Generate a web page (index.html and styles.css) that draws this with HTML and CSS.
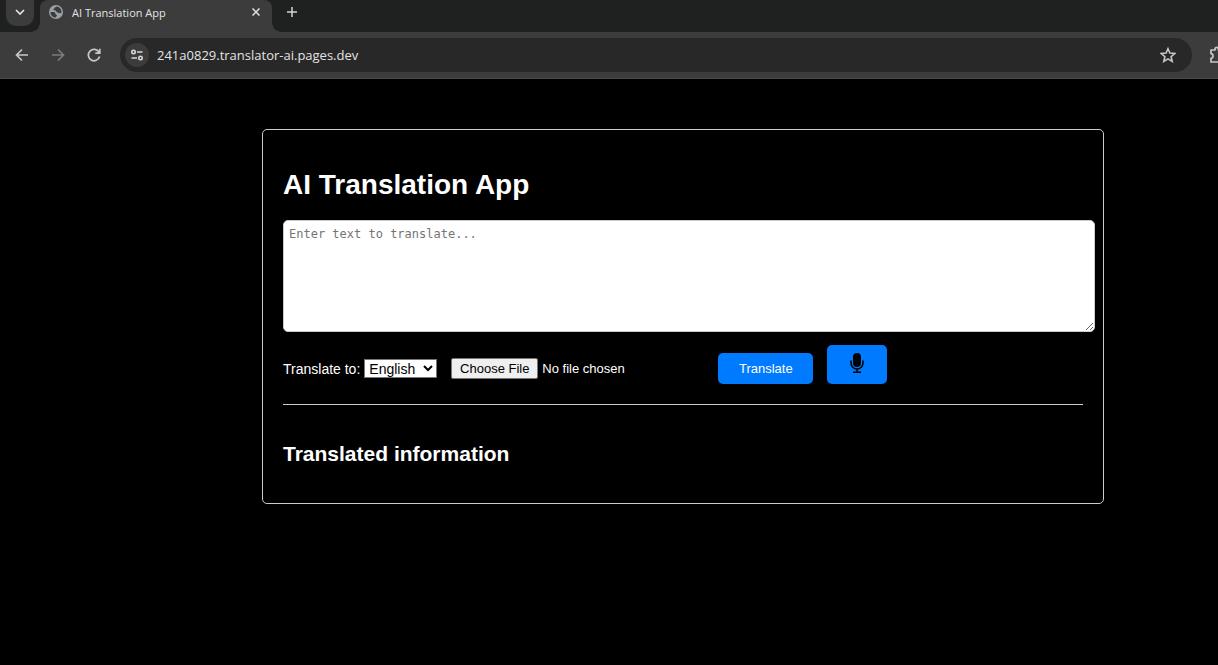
FILE: index.html
```html
<!DOCTYPE html>
<html lang="en">
<head>
<meta charset="utf-8">
<title>AI Translation App</title>
<link rel="stylesheet" href="styles.css">
</head>
<body>
<header class="browser">
  <div class="tab-strip">
    <button class="tab-search" aria-label="Search tabs">
      <svg width="10" height="6" viewBox="0 0 10 6"><path d="M1 1l4 4 4-4" fill="none" stroke="#e3e3e3" stroke-width="1.700"/></svg>
    </button>
    <div class="tab">
      <svg width="14" height="14" viewBox="0 0 14 14"><circle cx="7" cy="7" r="7" fill="#9aa0a6"/><path d="M7.500 1.500C5.500 2.200 6.300 3.300 5 3.500c-1 .2-.8 1.500.5 1.700 1.500.1 1.800.8 2 1.800.3 1 1.800.2 2.500 1 .7.500 2 .3 2.500-.5C12.700 4 10.500 1.800 7.500 1.500zM1.500 7c1.500.2 3.500-.3 4.500.7.8.8.2 1.800 1.500 2.100 1 .4-.1 1.700-.9 2.700C3.500 12.500 1.400 10 1.500 7z" fill="#3c3c3c"/></svg>
      <span class="tab-title">AI Translation App</span>
      <button class="plain" aria-label="Close tab">
        <svg width="8" height="8" viewBox="0 0 8 8"><path d="M.5.5l7 7M7.500.5l-7 7" stroke="#e3e3e3" stroke-width="1.500"/></svg>
      </button>
    </div>
    <button class="plain new-tab" aria-label="New tab">
      <svg width="12" height="12" viewBox="0 0 12 12"><path d="M6 1v10M1 6h10" stroke="#d4d4d4" stroke-width="1.500"/></svg>
    </button>
  </div>
  <div class="toolbar">
    <button class="plain nav" aria-label="Back">
      <svg width="14" height="14" viewBox="0 0 14 14"><path d="M13 7H2M7 1.500L1.500 7 7 12.500" fill="none" stroke="#c7c7c7" stroke-width="1.700"/></svg>
    </button>
    <button class="plain nav" aria-label="Forward">
      <svg width="14" height="14" viewBox="0 0 14 14"><path d="M1 7h11M7 1.500L12.500 7 7 12.500" fill="none" stroke="#7b7b7b" stroke-width="1.700"/></svg>
    </button>
    <button class="plain nav" aria-label="Reload">
      <svg width="14" height="14" viewBox="0 0 14 14"><path d="M12 4.200A5.700 5.700 0 1 0 12.600 8.500M12.800.8v4.400H8.300" fill="none" stroke="#c7c7c7" stroke-width="1.700"/></svg>
    </button>
    <div class="address">
      <button class="plain site-info" aria-label="Site information">
        <svg width="14" height="12" viewBox="0 0 14 12"><g fill="none" stroke="#d8d8d8" stroke-width="1.600"><circle cx="3.500" cy="3" r="1.700"/><path d="M7 3h5.500M1.500 9H7"/><circle cx="10.500" cy="9" r="1.700"/></g></svg>
      </button>
      <input class="url" type="text" aria-label="Address" value="241a0829.translator-ai.pages.dev">
      <button class="plain" aria-label="Bookmark">
        <svg width="16" height="16" viewBox="0 0 16 16"><path d="M8 1.700l1.900 4.400 4.800.4-3.600 3.200 1.100 4.700L8 11.900l-4.200 2.500 1.100-4.700L1.300 6.500l4.800-.4z" fill="none" stroke="#c7c7c7" stroke-width="1.600"/></svg>
      </button>
    </div>
    <button class="plain extensions" aria-label="Extensions">
      <svg width="18" height="18" viewBox="0 0 18 18"><path d="M3 4h4V3a1.700 1.700 0 0 1 3.400 0v1H14v4.500h1a1.700 1.700 0 0 1 0 3.400h-1V16H3v-3.700c2.700-.3 2.700-4.300 0-4.600z" fill="none" stroke="#c7c7c7" stroke-width="1.700" stroke-linejoin="round"/></svg>
    </button>
  </div>
</header>
<main class="page">
  <section class="card">
    <h1>AI Translation App</h1>
    <textarea class="source" aria-label="Text to translate" placeholder="Enter text to translate..."></textarea>
    <div class="controls">
      <div class="field">
        <label for="language">Translate to:</label>
        <select id="language"><option>English</option></select>
      </div>
      <input class="file" type="file" aria-label="File to translate">
      <button class="action">Translate</button>
      <button class="action mic" aria-label="Speak">
        <svg width="16" height="22" viewBox="0 0 16 22"><rect x="4" y="1" width="8" height="14" rx="4" fill="#000"/><path d="M2 8.500v2.500a6 6 0 0 0 12 0v-2.500M8 17v3M4 20.200h8" fill="none" stroke="#000" stroke-width="1.500"/></svg>
      </button>
    </div>
    <div class="result">
      <h2>Translated information</h2>
    </div>
  </section>
</main>
</body>
</html>
```
FILE: styles.css
```css
* { box-sizing: border-box; }
body {
  margin: 0;
  min-height: 100vh;
  background: #000;
  color: #fff;
  font-family: "Liberation Sans", Arial, sans-serif;
  overflow-x: hidden;
}
svg { display: block; flex: none; }
.plain {
  display: flex;
  align-items: center;
  justify-content: center;
  padding: 0;
  border: 0;
  background: none;
}
.browser {
  background: #3c3c3c;
  border-bottom: 1px solid #4b4b4b;
  font-family: "Open Sans", "Noto Sans", sans-serif;
}
.tab-strip {
  display: flex;
  height: 32px;
  padding-left: 6px;
  background: #1f2120;
}
.tab-search {
  display: flex;
  align-items: center;
  justify-content: center;
  width: 28px;
  height: 26px;
  margin-right: 6px;
  padding: 0 0 2px;
  border: 0;
  border-radius: 0 0 10px 10px;
  background: #3c3c3c;
}
.tab {
  position: relative;
  display: flex;
  align-items: center;
  gap: 9px;
  width: 232px;
  padding: 0 12px 8px 9px;
  border-radius: 8px 8px 0 0;
  background: #3c3c3c;
}
.tab::before,
.tab::after {
  content: "";
  position: absolute;
  bottom: 0;
  width: 10px;
  height: 10px;
}
.tab::before {
  right: 100%;
  background: radial-gradient(circle at 0 0, transparent 10px, #3c3c3c 10px);
}
.tab::after {
  left: 100%;
  background: radial-gradient(circle at 100% 0, transparent 10px, #3c3c3c 10px);
}
.tab-title {
  flex: 1;
  padding-top: 2px;
  color: #e3e3e3;
  font-size: 11px;
  line-height: 16px;
}
.new-tab { width: 40px; height: 24px; }
.toolbar {
  display: flex;
  align-items: center;
  height: 46px;
  padding-left: 4px;
  overflow: hidden;
}
.nav { width: 36px; height: 34px; }
.address {
  display: flex;
  flex: 1;
  align-items: center;
  height: 34px;
  margin: 0 16px 0 8px;
  padding: 0 16px 0 5px;
  border-radius: 17px;
  background: #282828;
}
.site-info {
  width: 24px;
  height: 24px;
  border-radius: 50%;
  background: #3c3c3c;
}
.url {
  flex: 1;
  min-width: 0;
  margin-left: 8px;
  padding: 0;
  border: 0;
  background: none;
  color: #e3e3e3;
  font: 13px/20px "Open Sans", "Noto Sans", sans-serif;
}
.extensions { margin-right: -8px; }
.page { padding: 50px 0 20px 148px; }
.card {
  max-width: 842px;
  margin: 0 auto;
  padding: 20px;
  border: 1px solid #ccc;
  border-radius: 5px;
}
h1 {
  margin: 19px 0;
  font-size: 28px;
  line-height: 32px;
}
.source {
  display: block;
  width: calc(100% + 12px);
  height: 112px;
  padding: 5px;
  border: 1px solid #ccc;
  border-radius: 5px;
  background: #fff;
  font: 12px/16px "DejaVu Sans Mono", monospace;
  resize: both;
}
.controls {
  display: flex;
  align-items: flex-end;
  gap: 14px;
  padding: 13px 0 20px;
  border-bottom: 1px solid #ccc;
}
.field {
  display: flex;
  align-items: center;
  gap: 4px;
  padding-bottom: 6px;
  font-size: 14px;
}
.field select {
  width: 73px;
  height: 19px;
  padding: 0;
  border: 1px solid #767676;
  background: #fff;
  color: #000;
  font: 14px "Liberation Sans", Arial, sans-serif;
}
.file {
  width: 253px;
  margin-bottom: 5px;
  font: 13px "Liberation Sans", Arial, sans-serif;
}
.file::file-selector-button {
  width: 87px;
  height: 21px;
  padding: 0;
  border: 1px solid #767676;
  border-radius: 2px;
  background: #efefef;
  color: #000;
  font: 13px "Liberation Sans", Arial, sans-serif;
}
.action {
  min-width: 95px;
  padding: 8px 20px;
  border: 0;
  border-radius: 5px;
  background: #007bff;
  color: #fff;
  font: 13px/15px "Liberation Sans", Arial, sans-serif;
}
.mic {
  display: flex;
  justify-content: center;
  min-width: 60px;
  height: 39px;
  padding-top: 7px;
}
.result { padding: 36px 0 16px; }
h2 {
  margin: 0;
  font-size: 21px;
  line-height: 26px;
}
```
